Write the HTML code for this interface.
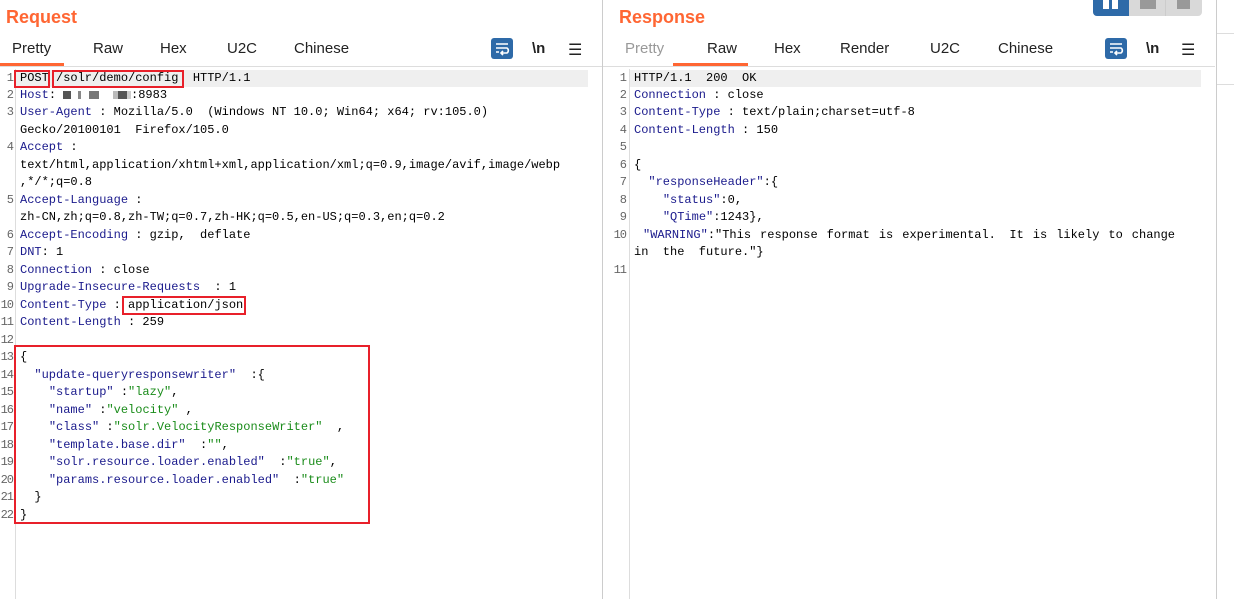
<!DOCTYPE html>
<html><head><meta charset="utf-8"><style>
*{margin:0;padding:0;box-sizing:border-box}
body{width:1234px;height:599px;background:#fff;position:relative;overflow:hidden;font-family:"Liberation Sans",sans-serif}
.t{position:absolute;font-size:18px;font-weight:bold;color:#ff6633;top:7px}
.tab{position:absolute;top:40px;font-size:15px;color:#222}
.ul{position:absolute;top:63px;height:3px;background:#ff6633}
.vl{position:absolute;width:1px;background:#ccc}
.hl{position:absolute;height:1px;background:#ddd}
.code{position:absolute;font-family:"Liberation Mono",monospace;font-size:12px;white-space:pre;line-height:17.48px}
.ln{position:absolute;font-family:"Liberation Mono",monospace;font-size:12px;color:#666;line-height:17.48px;text-align:right;white-space:pre;letter-spacing:-1px}
.k{color:#1a1a8c}.v{color:#1a8c1a}
.box{position:absolute;border:2px solid #e8202a}
.ic{position:absolute;top:38px;width:22px;height:21px;background:#2e6aa8;border-radius:3px}
.nl{position:absolute;top:40px;font-size:15px;color:#222;font-weight:bold}
.mn{position:absolute;top:40px;font-size:16px;color:#222}
.bl{display:inline-block;height:8px;background:#555;vertical-align:middle}
</style></head><body>
<div class="t" style="left:6px">Request</div>
<div class="t" style="left:619px">Response</div>
<div style="position:absolute;left:1093px;top:0;width:109px;height:16px;background:#d9d9d9;border-radius:0 0 4px 4px"></div>
<div style="position:absolute;left:1093px;top:0;width:36px;height:16px;background:#2e6aa8;border-radius:0 0 0 4px"></div>
<div style="position:absolute;left:1103px;top:0;width:6px;height:9px;background:#fff"></div>
<div style="position:absolute;left:1112px;top:0;width:6px;height:9px;background:#fff"></div>
<div style="position:absolute;left:1140px;top:0;width:16px;height:9px;background:#999"></div>
<div style="position:absolute;left:1177px;top:0;width:13px;height:9px;background:#999"></div>
<div class="vl" style="left:1165px;top:0;height:16px;background:#ccc"></div>

<div class="tab" style="left:12px">Pretty</div>
<div class="tab" style="left:93px">Raw</div>
<div class="tab" style="left:160px">Hex</div>
<div class="tab" style="left:227px">U2C</div>
<div class="tab" style="left:294px">Chinese</div>
<div class="ul" style="left:0;width:64px"></div>
<div class="ic" style="left:491px"><svg width="22" height="21"><path d="M5 6h12M5 10h11a3 3 0 0 1 0 5h-5M5 14h3M12 13l-2 2 2 2" stroke="#fff" stroke-width="1.6" fill="none"/></svg></div>
<div class="nl" style="left:532px">\n</div>
<div class="mn" style="left:568px">☰</div>

<div class="tab" style="left:625px;color:#999">Pretty</div>
<div class="tab" style="left:707px">Raw</div>
<div class="tab" style="left:774px">Hex</div>
<div class="tab" style="left:840px">Render</div>
<div class="tab" style="left:930px">U2C</div>
<div class="tab" style="left:998px">Chinese</div>
<div class="ul" style="left:673px;width:75px"></div>
<div class="ic" style="left:1105px"><svg width="22" height="21"><path d="M5 6h12M5 10h11a3 3 0 0 1 0 5h-5M5 14h3M12 13l-2 2 2 2" stroke="#fff" stroke-width="1.6" fill="none"/></svg></div>
<div class="nl" style="left:1146px">\n</div>
<div class="mn" style="left:1181px">☰</div>

<div class="hl" style="left:0;top:66px;width:602px"></div>
<div class="hl" style="left:603px;top:66px;width:612px"></div>
<div class="vl" style="left:602px;top:0;height:599px"></div>
<div class="vl" style="left:1216px;top:0;height:599px"></div>
<div class="hl" style="left:1217px;top:33px;width:17px"></div>
<div class="hl" style="left:1217px;top:84px;width:17px"></div>
<div class="vl" style="left:15px;top:69px;height:530px;background:#ddd"></div>
<div class="vl" style="left:629px;top:69px;height:530px;background:#ddd"></div>

<div style="position:absolute;left:16px;top:70px;width:572px;height:17px;background:#efefef"></div>
<div style="position:absolute;left:630px;top:70px;width:571px;height:17px;background:#efefef"></div>

<div class="ln" style="left:0;top:69.5px;width:13px">1
2
3

4


5

6
7
8
9
10
11
12
13
14
15
16
17
18
19
20
21
22</div>
<div class="code" style="left:20px;top:69.5px">POST /solr/demo/config  HTTP/1.1
<span class="k">Host</span>: <span class="bl" style="width:8px"></span> <span class="bl" style="width:3px;background:#888"></span> <span class="bl" style="width:10px;background:#777"></span>  <span class="bl" style="width:5px;background:#bbb"></span><span class="bl" style="width:9px"></span><span class="bl" style="width:4px;background:#ccc"></span>:8983
<span class="k">User-Agent</span> : Mozilla/5.0  (Windows NT 10.0; Win64; x64; rv:105.0)
Gecko/20100101  Firefox/105.0
<span class="k">Accept</span> :
text/html,application/xhtml+xml,application/xml;q=0.9,image/avif,image/webp
,*/*;q=0.8
<span class="k">Accept-Language</span> :
zh-CN,zh;q=0.8,zh-TW;q=0.7,zh-HK;q=0.5,en-US;q=0.3,en;q=0.2
<span class="k">Accept-Encoding</span> : gzip,  deflate
<span class="k">DNT</span>: 1
<span class="k">Connection</span> : close
<span class="k">Upgrade-Insecure-Requests</span>  : 1
<span class="k">Content-Type</span> : application/json
<span class="k">Content-Length</span> : 259

{
  <span class="k">"update-queryresponsewriter"</span>  :{
    <span class="k">"startup"</span> :<span class="v">"lazy"</span>,
    <span class="k">"name"</span> :<span class="v">"velocity"</span> ,
    <span class="k">"class"</span> :<span class="v">"solr.VelocityResponseWriter"</span>  ,
    <span class="k">"template.base.dir"</span>  :<span class="v">""</span>,
    <span class="k">"solr.resource.loader.enabled"</span>  :<span class="v">"true"</span>,
    <span class="k">"params.resource.loader.enabled"</span>  :<span class="v">"true"</span>
  }
}</div>
<div class="box" style="left:14px;top:70px;width:36px;height:18px"></div>
<div class="box" style="left:52px;top:70px;width:132px;height:18px"></div>
<div class="box" style="left:122px;top:296px;width:124px;height:19px"></div>
<div class="box" style="left:14px;top:345px;width:356px;height:179px"></div>

<div class="ln" style="left:612px;top:69.5px;width:14px">1
2
3
4
5
6
7
8
9
10

11</div>
<div class="code" style="left:634px;top:69.5px">HTTP/1.1  200  OK
<span class="k">Connection</span> : close
<span class="k">Content-Type</span> : text/plain;charset=utf-8
<span class="k">Content-Length</span> : 150

{
  <span class="k">"responseHeader"</span>:{
    <span class="k">"status"</span>:0,
    <span class="k">"QTime"</span>:1243},
<span style="word-spacing:-2.7px">  <span class="k">"WARNING"</span>:"This  response  format  is  experimental.   It  is  likely  to  change</span>
in  the  future."}</div>
</body></html>
